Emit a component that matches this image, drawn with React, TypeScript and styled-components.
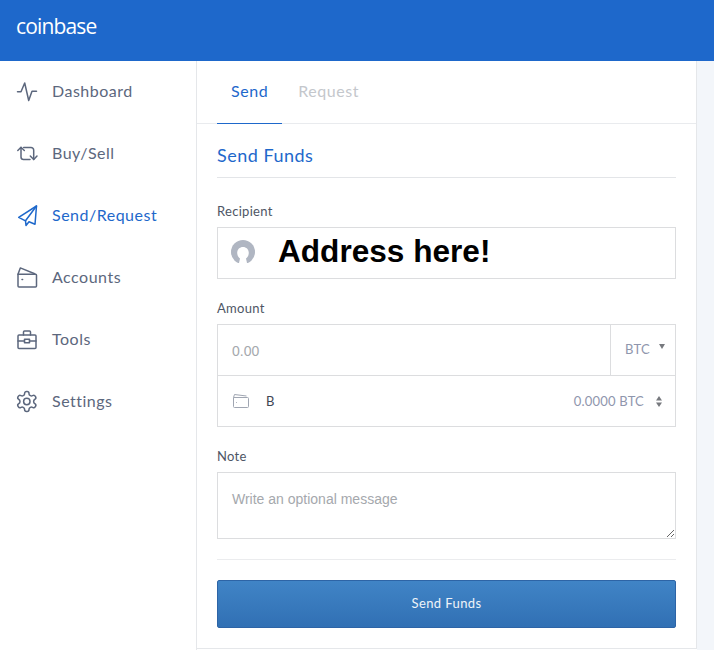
import styled, { createGlobalStyle } from "styled-components";

const GlobalStyle = createGlobalStyle`
  html, body {
    margin: 0;
    padding: 0;
    background: white;
  }
  * {
    box-sizing: border-box;
  }
`;

const Page = styled.div`
  width: 714px;
  height: 650px;
  overflow: hidden;
  display: flex;
  flex-direction: column;
  font-family: "Lato", "Open Sans", sans-serif;
`;

const Header = styled.header`
  height: 61px;
  flex: none;
  background: #1e68cb;
  display: flex;
  align-items: center;
  padding: 0 0 9px 16px;
`;

const Logo = styled.div`
  color: white;
  font-family: "Open Sans", sans-serif;
  font-size: 21px;
  letter-spacing: -0.85px;
`;

const Body = styled.div`
  flex: 1;
  display: flex;
  min-height: 0;
`;

const Sidebar = styled.nav`
  width: 197px;
  flex: none;
  border-right: 1px solid #e5e7ea;
`;

const NavItem = styled.div<{ $active?: boolean }>`
  height: 62px;
  padding: 0 0 4px 17px;
  display: flex;
  align-items: center;
  gap: 15px;
  font-size: 16px;
  letter-spacing: 0.5px;
  color: ${(p) => (p.$active ? "#1e68cb" : "#5c677d")};
  svg {
    width: 20px;
    height: 21px;
    margin-top: 2px;
    flex: none;
    overflow: visible;
    fill: none;
    stroke: currentColor;
    stroke-width: 1.5;
    stroke-linecap: round;
    stroke-linejoin: round;
  }
`;

const Main = styled.main`
  width: 500px;
  flex: none;
  height: 588px;
  border-right: 1px solid #e5e7ea;
  border-bottom: 1px solid #e5e7ea;
`;

const Gutter = styled.div`
  flex: 1;
  background: #f3f6fa;
`;

const Tabs = styled.div`
  height: 63px;
  padding-left: 20px;
  display: flex;
  gap: 2px;
  border-bottom: 1px solid #e9ebee;
`;

const Tab = styled.div<{ $active?: boolean }>`
  height: 63px;
  padding: 0 14px 4px;
  display: flex;
  align-items: center;
  font-size: 16px;
  letter-spacing: 0.55px;
  color: ${(p) => (p.$active ? "#1e68cb" : "#c4c7cc")};
  border-bottom: 1px solid ${(p) => (p.$active ? "#1e68cb" : "transparent")};
`;

const Form = styled.div`
  padding: 0 20px;
`;

const Title = styled.h2`
  margin: 0 0 25px;
  height: 54px;
  display: flex;
  align-items: center;
  padding-top: 8px;
  font-size: 18px;
  font-weight: 400;
  letter-spacing: 0.5px;
  color: #1e68cb;
  border-bottom: 1px solid #e3e5e8;
`;

const Label = styled.div`
  height: 16px;
  margin-bottom: 8px;
  font-size: 13px;
  line-height: 16px;
  letter-spacing: 0.3px;
  color: #4e5665;
`;

const Box = styled.div`
  border: 1px solid #dcdddf;
`;

const RecipientBox = styled(Box)`
  height: 52px;
  margin-bottom: 21px;
  padding-left: 13px;
  display: flex;
  align-items: center;
  gap: 23px;
`;

const Avatar = styled.svg`
  width: 24px;
  height: 23px;
  margin-bottom: 3px;
  flex: none;
`;

const AddressText = styled.div`
  margin-bottom: 4px;
  font-family: "Liberation Sans", Arial, sans-serif;
  font-size: 31.6px;
  font-weight: 700;
  color: black;
`;

const AmountBox = styled(Box)`
  margin-bottom: 21px;
`;

const AmountRow = styled.div`
  height: 51px;
  display: flex;
  border-bottom: 1px solid #dcdddf;
`;

const AmountInput = styled.input`
  flex: 1;
  min-width: 0;
  border: 0;
  outline: 0;
  padding: 2px 0 0 14px;
  font-family: "Liberation Sans", Arial, sans-serif;
  font-size: 14px;
  &::placeholder {
    color: #a5a8ad;
    opacity: 1;
  }
`;

const CurrencySelect = styled.div`
  width: 65px;
  flex: none;
  border-left: 1px solid #dcdddf;
  display: flex;
  align-items: center;
  padding: 0 0 2px 14px;
  gap: 5px;
  font-size: 13px;
  letter-spacing: 0.3px;
  color: #8f96ad;
`;

const CaretDown = styled.svg`
  width: 6px;
  height: 5px;
  margin: 0 0 5px 4px;
  fill: #77797e;
`;

const AccountRow = styled.div`
  height: 50px;
  display: flex;
  align-items: center;
  padding: 0 13px 0 15px;
  font-size: 13px;
  color: #8f96ad;
  letter-spacing: 0.2px;
`;

const WalletIcon = styled.svg`
  width: 16px;
  height: 16px;
  flex: none;
  fill: none;
  stroke: #a0a6b2;
  stroke-width: 1;
`;

const AccountName = styled.div`
  margin-left: 17px;
  flex: 1;
  color: #3f4654;
`;

const Stepper = styled.svg`
  width: 6px;
  height: 11px;
  margin-left: 12px;
  fill: #77797e;
`;

const NoteInput = styled.textarea`
  display: block;
  width: 100%;
  height: 67px;
  padding: 18px 14px 0;
  margin: 0;
  border: 1px solid #dcdddf;
  border-radius: 0;
  outline: 0;
  font-family: "Liberation Sans", Arial, sans-serif;
  font-size: 14px;
  &::placeholder {
    color: #a5a8ad;
    opacity: 1;
  }
`;

const Divider = styled.div`
  height: 1px;
  margin: 20px 0;
  background: #ebecee;
`;

const SubmitButton = styled.button`
  display: block;
  width: 100%;
  height: 48px;
  padding: 0 0 2px;
  border: 1px solid #2d64a6;
  border-radius: 2px;
  background: linear-gradient(#4084c6, #3170b4);
  color: #eef3f9;
  font-family: "Lato", "Open Sans", sans-serif;
  font-size: 13px;
  letter-spacing: 0.4px;
`;

const navItems = [
  {
    label: "Dashboard",
    icon: <path d="M.5 10.700H4L7.700 2l4 17.500L15 10.300h4.500" />,
  },
  {
    label: "Buy/Sell",
    icon: (
      <>
        <path d="M.8 7.500L4 4.300l3.300 3.200" />
        <path d="M4 4.500v9.500a2.500 2.500 0 0 0 2.500 2.500H13" />
        <path d="M6.700 4.500H14a2.700 2.700 0 0 1 2.700 2.700v9.300" />
        <path d="M13.300 13l3.400 3.500 3.300-3.500" />
      </>
    ),
  },
  {
    label: "Send/Request",
    active: true,
    icon: (
      <>
        <path d="M19.500 1L1.700 12.300l6.800 3.500.5 4.700 3-3.700 6 2.500z" />
        <path d="M19.500 1L8.500 15.800" />
      </>
    ),
  },
  {
    label: "Accounts",
    icon: (
      <>
        <path d="M1 7.300h17.500a1 1 0 0 1 1 1V19a1 1 0 0 1-1 1H2a1 1 0 0 1-1-1z" />
        <path d="M1 7.300L3.300.9l14.400 5.800" />
        <path d="M5 12.500h.6" />
      </>
    ),
  },
  {
    label: "Tools",
    icon: (
      <>
        <rect x="1" y="6" width="18" height="13.500" rx="1" />
        <path d="M6.500 6V3a1 1 0 0 1 1-1h5a1 1 0 0 1 1 1v3" />
        <path d="M1 12h6.500M12.500 12H19" />
        <rect x="7.500" y="10.300" width="5" height="3.400" />
      </>
    ),
  },
  {
    label: "Settings",
    icon: (
      <g transform="translate(-2.200 -1.500)">
        <circle cx="12" cy="12" r="3.200" />
        <path d="M12.220 2h-.44a2 2 0 0 0-2 2v.18a2 2 0 0 1-1 1.730l-.43.250a2 2 0 0 1-2 0l-.15-.080a2 2 0 0 0-2.730.730l-.220.380a2 2 0 0 0 .730 2.730l.150.100a2 2 0 0 1 1 1.720v.510a2 2 0 0 1-1 1.740l-.150.090a2 2 0 0 0-.730 2.730l.220.380a2 2 0 0 0 2.730.730l.150-.080a2 2 0 0 1 2 0l.430.250a2 2 0 0 1 1 1.730V20a2 2 0 0 0 2 2h.440a2 2 0 0 0 2-2v-.180a2 2 0 0 1 1-1.730l.430-.250a2 2 0 0 1 2 0l.150.080a2 2 0 0 0 2.730-.730l.220-.390a2 2 0 0 0-.730-2.730l-.150-.080a2 2 0 0 1-1-1.740v-.500a2 2 0 0 1 1-1.740l.150-.090a2 2 0 0 0 .730-2.730l-.220-.380a2 2 0 0 0-2.730-.730l-.150.080a2 2 0 0 1-2 0l-.430-.250a2 2 0 0 1-1-1.730V4a2 2 0 0 0-2-2z" />
      </g>
    ),
  },
];

export default function App() {
  return (
    <Page>
      <GlobalStyle />
      <Header>
        <Logo>coinbase</Logo>
      </Header>
      <Body>
        <Sidebar>
          {navItems.map((item) => (
            <NavItem key={item.label} $active={item.active}>
              <svg viewBox="0 0 20 21">{item.icon}</svg>
              {item.label}
            </NavItem>
          ))}
        </Sidebar>
        <Main>
          <Tabs>
            <Tab $active>Send</Tab>
            <Tab>Request</Tab>
          </Tabs>
          <Form>
            <Title>Send Funds</Title>
            <Label>Recipient</Label>
            <RecipientBox>
              <Avatar viewBox="0 0 24 23">
                <circle cx="12" cy="12" r="12" fill="#b0b6c2" />
                <path
                  d="M12 7c-3.200 0-5.800 2.300-5.800 6 0 2.500 1.500 4.500 2.800 5.500L8 23h8l-1-4.500c1.300-1 2.800-3 2.800-5.500C17.800 9.300 15.200 7 12 7z"
                  fill="white"
                />
              </Avatar>
              <AddressText>Address here!</AddressText>
            </RecipientBox>
            <Label>Amount</Label>
            <AmountBox>
              <AmountRow>
                <AmountInput placeholder="0.00" />
                <CurrencySelect>
                  BTC
                  <CaretDown viewBox="0 0 6 5">
                    <path d="M0 0h6L3 5z" />
                  </CaretDown>
                </CurrencySelect>
              </AmountRow>
              <AccountRow>
                <WalletIcon viewBox="0 0 16 16">
                  <path d="M.5 4.500h14a1 1 0 0 1 1 1v8a1 1 0 0 1-1 1h-13a1 1 0 0 1-1-1z" />
                  <path d="M.5 4.500l1-3 12 1.500" />
                  <path d="M3 9.500h.8" />
                </WalletIcon>
                <AccountName>B</AccountName>
                0.0000 BTC
                <Stepper viewBox="0 0 6 11">
                  <path d="M3 0l3 4.500H0zM3 11L0 6.500h6z" />
                </Stepper>
              </AccountRow>
            </AmountBox>
            <Label>Note</Label>
            <NoteInput placeholder="Write an optional message" />
            <Divider />
            <SubmitButton>Send Funds</SubmitButton>
          </Form>
        </Main>
        <Gutter />
      </Body>
    </Page>
  );
}
